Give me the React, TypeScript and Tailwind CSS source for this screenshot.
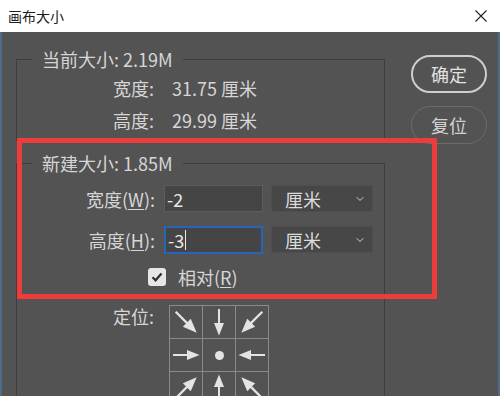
import { ChevronDown } from 'lucide-react';

type Dir = { angle: number; diag: boolean } | null;

const anchorCells: Dir[] = [
  { angle: 45, diag: true },
  { angle: 90, diag: false },
  { angle: 135, diag: true },
  { angle: 0, diag: false },
  null,
  { angle: 180, diag: false },
  { angle: -45, diag: true },
  { angle: -90, diag: false },
  { angle: -135, diag: true },
];

function Arrow({ angle, diag }: { angle: number; diag: boolean }) {
  const s = diag ? 1.12 : 1;
  return (
    <svg width="32" height="32" viewBox="-16 -16 32 32">
      <g transform={`rotate(${angle}) scale(${s})`}>
        <line x1="-13" y1="0" x2="2" y2="0" stroke="#e4e4e4" strokeWidth="2" />
        <polygon points="13.5,0 1,-5 1,5" fill="#e4e4e4" />
      </g>
    </svg>
  );
}

function UnitSelect() {
  return (
    <div className="ml-[8px] flex h-[27px] w-[102px] items-center justify-between rounded-[2px] border border-[#4e4e4e] bg-[#474747] pl-[13px] pr-[6px] text-[18px] leading-[20px] text-[#dcdcdc]">
      <span>厘米</span>
      <ChevronDown size={12} strokeWidth={2} className="text-[#d0d0d0]" />
    </div>
  );
}

export default function App() {
  return (
    <div className="flex h-[396px] w-[500px] flex-col overflow-hidden bg-[#535353] font-['Noto_Sans_CJK_SC',sans-serif] text-[#d6d6d6]">
      <div className="flex h-[32px] shrink-0 items-center justify-between bg-white pl-[8px] pr-[13px]">
        <span className="text-[14px] leading-[18px] text-[#1a1a1a]">画布大小</span>
        <svg width="12" height="12" viewBox="0 0 12 12">
          <path d="M0.5 0.5 L11.5 11.5 M11.5 0.5 L0.5 11.5" stroke="#222" strokeWidth="1.1" />
        </svg>
      </div>

      <div className="relative flex flex-1 border-x-2 border-[#4e6b88] pl-[14px]">
        <div className="w-[369px] shrink-0">
          <fieldset className="mt-[17px] border border-[#3d3d3d]">
            <legend className="ml-[15px] px-[10px] text-[18px] leading-[20px]">当前大小: 2.19M</legend>
            <div className="pb-[4px] pt-[3px]">
              <div className="flex h-[32px] items-center pl-[96px] text-[18px] leading-[20px]">
                <span className="w-[59px]">宽度:</span>
                <span>31.75 厘米</span>
              </div>
              <div className="flex h-[32px] items-center pl-[96px] text-[18px] leading-[20px]">
                <span className="w-[59px]">高度:</span>
                <span>29.99 厘米</span>
              </div>
            </div>
          </fieldset>

          <fieldset className="mt-[12px] border border-[#3d3d3d]">
            <legend className="ml-[15px] px-[10px] text-[18px] leading-[20px]">新建大小: 1.85M</legend>
            <div className="pt-[12px] text-[18px] leading-[20px]">
              <div className="flex h-[27px] items-center">
                <span className="w-[138px] text-right">
                  宽度(<span className="underline underline-offset-2">W</span>):
                </span>
                <div className="ml-[9px] flex h-[27px] w-[99px] items-center border border-[#5c5c5c] bg-[#454545] pl-[2px] text-[#e8e8e8]">
                  -2
                </div>
                <UnitSelect />
              </div>

              <div className="mt-[14px] flex h-[27px] items-center">
                <span className="w-[138px] text-right">
                  高度(<span className="underline underline-offset-2">H</span>):
                </span>
                <div className="ml-[9px] flex h-[28px] w-[99px] items-center border-2 border-[#2765b8] bg-[#454545] pl-[2px] text-[#e8e8e8]">
                  -3
                  <span className="ml-[1px] h-[20px] w-[1px] bg-[#e8e8e8]" />
                </div>
                <UnitSelect />
              </div>

              <div className="mt-[14px] flex h-[20px] items-center pl-[131px]">
                <span className="flex h-[18px] w-[18px] items-center justify-center rounded-[3px] bg-[#e6e6e6]">
                  <svg width="12" height="12" viewBox="0 0 12 12">
                    <path d="M1.5 6.2 L4.6 9.3 L10.5 2.6" fill="none" stroke="#2e2e2e" strokeWidth="2.2" />
                  </svg>
                </span>
                <span className="ml-[12px]">
                  相对(<span className="underline underline-offset-2">R</span>)
                </span>
              </div>

              <div className="mt-[18px] flex pl-[96px]">
                <span className="w-[56px] pt-[1px]">定位:</span>
                <div className="grid grid-cols-3 border-l border-t border-[#8a8a8a]">
                  {anchorCells.map((cell, i) => (
                    <div
                      key={i}
                      className="flex h-[33px] w-[33px] items-center justify-center border-b border-r border-[#8a8a8a]"
                    >
                      {cell ? (
                        <Arrow angle={cell.angle} diag={cell.diag} />
                      ) : (
                        <span className="h-[9px] w-[9px] rounded-full bg-[#e4e4e4]" />
                      )}
                    </div>
                  ))}
                </div>
              </div>
              <div className="h-[40px]" />
            </div>
          </fieldset>
        </div>

        <div className="ml-[26px] flex flex-col pt-[23px]">
          <button
            type="button"
            className="flex h-[38px] w-[76px] items-center justify-center rounded-full border-2 border-[#cfcfcf] text-[18px] leading-[20px] text-[#e2e2e2]"
          >
            确定
          </button>
          <button
            type="button"
            className="mt-[13px] flex h-[38px] w-[76px] items-center justify-center rounded-full border-[1.5px] border-[#6c6c6c] text-[18px] leading-[20px] text-[#d2d2d2]"
          >
            复位
          </button>
        </div>

        <div className="pointer-events-none absolute left-[15px] top-[106px] h-[161px] w-[420px] border-[5px] border-[#ee3b3b]" />
      </div>
    </div>
  );
}
